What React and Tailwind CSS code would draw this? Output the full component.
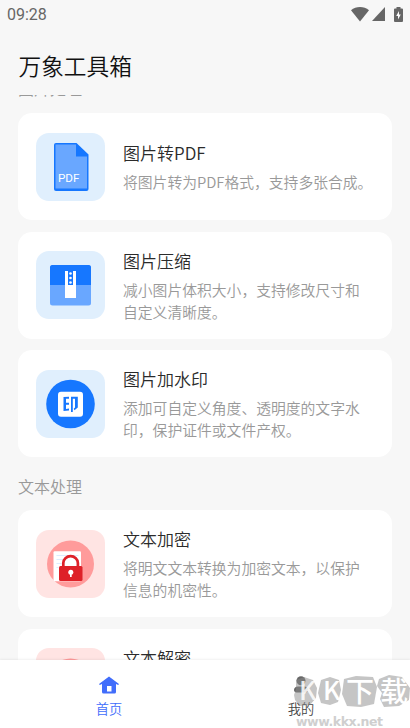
import { useState } from "react";

function PdfIcon() {
  return (
    <svg className="w-full h-full" viewBox="0 0 68 68">
      <path d="M19.500 10H40l12 11.500V56a2 2 0 0 1-2 2H19.500a2 2 0 0 1-2-2V12a2 2 0 0 1 2-2z" fill="#1677ff" />
      <path d="M19 11.500h20.500V23.500H50.500V55.500H19z" fill="#69a7ff" />
      <text x="21.500" y="49" fontSize="11.700" fontWeight="400" fill="#fff" fontFamily="Roboto, sans-serif">PDF</text>
    </svg>
  );
}

function ZipIcon() {
  return (
    <svg className="w-full h-full" viewBox="0 0 68 68">
      <rect x="13.500" y="14" width="41" height="40.500" rx="2.500" fill="#69a7ff" />
      <path d="M13.500 34V16.500a2.500 2.500 0 0 1 2.500-2.500h36a2.500 2.500 0 0 1 2.500 2.500V34z" fill="#1677ff" />
      <path d="M28.500 20h11v27h-11z" fill="#fff" />
      <path d="M31.500 20h5v14h-5z" fill="#1677ff" />
      <circle cx="34" cy="22.500" r="1.300" fill="#fff" />
      <circle cx="34" cy="27" r="1.300" fill="#fff" />
      <circle cx="34" cy="31.500" r="1.300" fill="#fff" />
    </svg>
  );
}

function StampIcon() {
  return (
    <svg className="w-full h-full" viewBox="0 0 68 68">
      <circle cx="34" cy="34" r="24.300" fill="#1677ff" />
      <rect x="21.500" y="21.700" width="25" height="25" rx="3" fill="#fff" />
      <path d="M27 27l5.500-.3v2H29.500v4H32.500v2H29.500v4.300l3-.5v1.900L27 41z" fill="#1677ff" />
      <path d="M34.500 26.700h6.800V37.500L38 40.300l-.8-1.600 1.300-1.200V28.700H36.300V42h-1.800z" fill="#1677ff" />
    </svg>
  );
}

function LockIcon() {
  return (
    <svg className="w-full h-full" viewBox="0 0 68 68">
      <circle cx="34" cy="34" r="23.500" fill="#ff9b9b" />
      <rect x="17" y="21.200" width="27.500" height="30" rx="1.200" fill="#fff" />
      <path d="M20 25.500h22M20 29.500h7M20 33.500h5M20 37.500h2" stroke="#dcecff" strokeWidth="1.200" />
      <path d="M26.800 37v-4a7.300 6.800 0 0 1 14.600 0V37" fill="none" stroke="#de2128" strokeWidth="2.700" />
      <rect x="22.500" y="36" width="23.500" height="15" rx="1.500" fill="#de2128" />
      <circle cx="34.300" cy="42.300" r="2.500" fill="#fff" />
      <path d="M33.500 43h1.700v4h-1.700z" fill="#fff" />
    </svg>
  );
}

const imageTools = [
  { title: "图片转PDF", desc: "将图片转为PDF格式，支持多张合成。", icon: PdfIcon, bg: "bg-[#e0effd]" },
  { title: "图片压缩", desc: "减小图片体积大小，支持修改尺寸和自定义清晰度。", icon: ZipIcon, bg: "bg-[#e0effd]" },
  { title: "图片加水印", desc: "添加可自定义角度、透明度的文字水印，保护证件或文件产权。", icon: StampIcon, bg: "bg-[#e0effd]" },
];

const textTools = [
  { title: "文本加密", desc: "将明文文本转换为加密文本，以保护信息的机密性。", icon: LockIcon, bg: "bg-[#ffe4e3]" },
  { title: "文本解密", desc: "将加密文本还原为明文文本，以查看原始的信息。", icon: LockIcon, bg: "bg-[#ffe4e3]" },
];

function StatusBar() {
  return (
    <div className="h-7 pl-[7px] pr-[7px] flex items-center justify-between text-[#666]">
      <span className="font-[Roboto] text-[16px] font-[450] leading-none pt-[2px]">09:28</span>
      <div className="flex items-center">
        <svg className="w-[18px] h-[15px]" viewBox="0 0 18 15" fill="currentColor">
          <path d="M0 3.300C5-1 13-1 18 3.300L9 14.500z" />
        </svg>
        <svg className="w-[13px] h-[14px] ml-[3px]" viewBox="0 0 13 14" fill="currentColor">
          <path d="M13 0v14H0z" />
        </svg>
        <svg className="w-[9px] h-[15px] ml-[9px]" viewBox="0 0 9 15" fill="currentColor">
          <path d="M2.500 0h4v1.500H8a1 1 0 0 1 1 1V14a1 1 0 0 1-1 1H1a1 1 0 0 1-1-1V2.500a1 1 0 0 1 1-1h1.500z" />
          <path d="M5 4v3.500h1.800L4 12.500V9H2.200z" fill="#fff" />
        </svg>
      </div>
    </div>
  );
}

function ToolCard({ tool }) {
  const Icon = tool.icon;
  return (
    <div className="h-[107px] shrink-0 rounded-[14px] bg-white flex items-center pl-[18px]">
      <div className={`w-[69px] h-[68px] shrink-0 rounded-[13px] ${tool.bg}`}>
        <Icon />
      </div>
      <div className="ml-[18px] w-[251px]">
        <h3 className="text-[17px] leading-[25px] text-[#2b2b2b]">{tool.title}</h3>
        <p className="mt-[6px] text-[14.8px] leading-[21.7px] text-[#999]">{tool.desc}</p>
      </div>
    </div>
  );
}

function Section({ title, tools }) {
  return (
    <section>
      <h2 className="h-[53px] pt-[17px] text-[16px] leading-[24px] text-[#999]">{title}</h2>
      <div className="flex flex-col gap-[11.500px]">
        {tools.map((tool) => (
          <ToolCard key={tool.title} tool={tool} />
        ))}
      </div>
    </section>
  );
}

function Watermark() {
  return (
    <svg className="absolute left-[290px] top-[14px] w-[120px] h-[55px]" viewBox="0 0 120 55">
      <g fill="#8c8c8c" fillOpacity="0.5">
        <path d="M6 6l8-3 9 3 4 8-1 10-6 7-10 1-5-6-1-5 2-6z" />
        <path d="M31 6l9-3 9 3 2 10-3 12-8 3-9-2-3-10z" />
        <path d="M54 5l12-3 17 1 4 10-3 17-13 3-14-1-5-12z" />
        <path d="M89 5l10-4 13 2 8 11-1 12-10 6-15 1-4-8 2-6-5-7z" />
      </g>
      <g fill="#fff" fontFamily="'Noto Sans CJK SC', sans-serif" fontWeight="500">
        <text x="9" y="26" fontSize="26" fillOpacity="0.85">K</text>
        <text x="33" y="26" fontSize="26">K</text>
        <text x="56" y="28" fontSize="28">下</text>
        <text x="90" y="28" fontSize="28">载</text>
      </g>
      <text x="6" y="51.500" fontSize="12.500" fontWeight="700" fontFamily="'DejaVu Sans', sans-serif" fill="#cfcfcf" textLength="87">www.kkx.net</text>
    </svg>
  );
}

export default function App() {
  const [tab, setTab] = useState("home");

  return (
    <div className="w-full max-w-[410px] h-screen bg-[#f7f7f7] flex flex-col overflow-hidden font-['Noto_Sans_CJK_SC',sans-serif] font-[350]">
      <StatusBar />
      <header className="h-[67px] shrink-0 px-[18.500px] pt-[21px]">
        <h1 className="text-[22.700px] leading-[34px] text-[#111]">万象工具箱</h1>
      </header>

      {/* Tool list, scrolled just past the first heading */}
      <main className="flex-1 min-h-0 overflow-hidden px-[18px]">
        <div className="-mt-[35px] [&>section:first-child>h2]:pt-[16px]">
          <Section title="图片处理" tools={imageTools} />
          <Section title="文本处理" tools={textTools} />
        </div>
      </main>

      {/* Bottom tabs */}
      <nav className="relative h-[68px] shrink-0 bg-white flex shadow-[0_-1px_2px_rgba(0,0,0,0.06)]">
        <button
          className={`w-[218px] pt-[16px] flex flex-col items-center ${tab === "home" ? "text-[#416dfb]" : "text-[#444]"}`}
          onClick={() => setTab("home")}
        >
          <svg className="w-5 h-[18px]" viewBox="0 0 20 18" fill="currentColor">
            <path d="M10 .5L20 8l-.8 1-2.200-1v8a1.500 1.500 0 0 1-1.500 1.500h-11A1.500 1.500 0 0 1 3 16V8L.8 9 0 8z" />
            <path d="M8 10h4.500v5.500H8z" fill="#fff" />
          </svg>
          <span className="mt-[5px] text-[13.200px] leading-[20px]">首页</span>
        </button>
        <button
          className={`w-[166px] pt-[16px] flex flex-col items-center ${tab === "mine" ? "text-[#416dfb]" : "text-[#444]"}`}
          onClick={() => setTab("mine")}
        >
          <svg className="w-4 h-[18px]" viewBox="0 0 16 18" fill="#666">
            <circle cx="8" cy="4.800" r="4.500" />
            <path d="M5 10.500h6c3 0 4 2 4 3.500s-1 2.500-2.500 2.500h-9C2 16.500 1 15.500 1 14s1-3.500 4-3.500z" />
          </svg>
          <span className="mt-[5px] text-[13.200px] leading-[20px]">我的</span>
        </button>
        <Watermark />
      </nav>
    </div>
  );
}
